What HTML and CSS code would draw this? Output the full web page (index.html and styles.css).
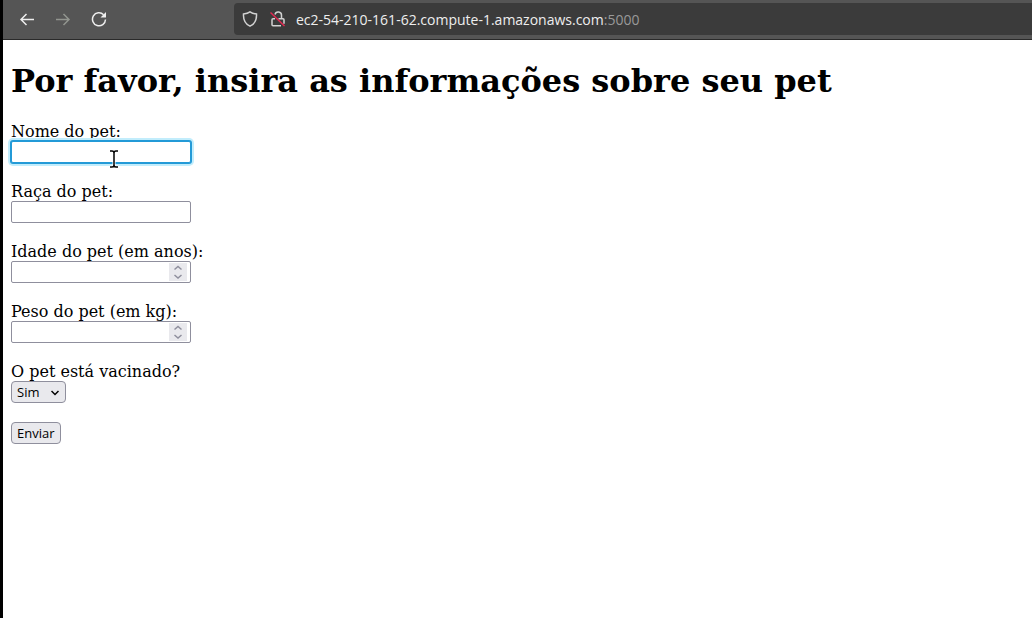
FILE: index.html
```html
<!DOCTYPE html>
<html lang="pt-BR">
<head>
<meta charset="utf-8">
<title>Informações do pet</title>
<link rel="stylesheet" href="styles.css">
</head>
<body>
<div class="window">
  <header class="toolbar">
    <nav class="nav">
      <button class="nav-button" type="button" aria-label="Voltar">
        <svg width="16" height="16" viewBox="0 0 16 16"><path d="M15 8.500H2M7.500 3L2 8.500 7.500 14"/></svg>
      </button>
      <button class="nav-button nav-button-off" type="button" aria-label="Avançar" disabled>
        <svg width="16" height="16" viewBox="0 0 16 16"><path d="M1 8.500h13M8.500 3L14 8.500 8.500 14"/></svg>
      </button>
      <button class="nav-button" type="button" aria-label="Recarregar">
        <svg width="16" height="16" viewBox="0 0 16 16"><path d="M12.600 3.700A6.500 6.500 0 1 0 14.500 8.500"/><path class="solid" d="M15 1v5.500H9.500z"/></svg>
      </button>
    </nav>
    <div class="address">
      <svg class="address-icon" width="16" height="16" viewBox="0 0 16 16"><path d="M8 .8C6 2.200 3.800 2.700 1.500 3c-.3 5 1 9.500 6.500 12.200C13.500 12.500 14.800 8 14.500 3 12.200 2.700 10 2.200 8 .8z"/></svg>
      <svg class="address-icon" width="16" height="16" viewBox="0 0 16 16"><path d="M5 3.500a3.300 3.300 0 0 1 6.500 1V8M8.500 7.700H13q1 0 1 1v4M11 14.800H3q-1 0-1-1v-5q0-1 1-1h2"/><path class="slash" d="M.5 1.500l14 13.500"/></svg>
      <div class="url">ec2-54-210-161-62.compute-1.amazonaws.com<span class="port">:5000</span></div>
    </div>
  </header>
  <main class="page">
    <h1 class="title">Por favor, insira as informações sobre seu pet</h1>
    <form class="form">
      <div class="field">
        <label class="label" for="nome">Nome do pet:</label>
        <div class="control">
          <input class="box box-focused" id="nome" name="nome" type="text">
          <svg class="pointer" width="10" height="20" viewBox="0 0 10 20"><path class="halo" d="M1 2h2q2 0 2 2 0-2 2-2h2M5 4v12M1 18h2q2 0 2-2 0 2 2 2h2"/><path d="M1 2h2q2 0 2 2 0-2 2-2h2M5 4v12M1 18h2q2 0 2-2 0 2 2 2h2"/></svg>
        </div>
      </div>
      <div class="field">
        <label class="label" for="raca">Raça do pet:</label>
        <input class="box" id="raca" name="raca" type="text">
      </div>
      <div class="field">
        <label class="label" for="idade">Idade do pet (em anos):</label>
        <div class="control">
          <input class="box" id="idade" name="idade" type="number">
          <svg class="spinner" width="18" height="18" viewBox="0 0 18 18"><path d="M5.500 6.500L9 3.500l3.500 3M5.500 12L9 15l3.500-3"/></svg>
        </div>
      </div>
      <div class="field">
        <label class="label" for="peso">Peso do pet (em kg):</label>
        <div class="control">
          <input class="box" id="peso" name="peso" type="number">
          <svg class="spinner" width="18" height="18" viewBox="0 0 18 18"><path d="M5.500 6.500L9 3.500l3.500 3M5.500 12L9 15l3.500-3"/></svg>
        </div>
      </div>
      <div class="field">
        <label class="label" for="vacinado">O pet está vacinado?</label>
        <div class="control">
          <select class="select" id="vacinado" name="vacinado"><option>Sim</option><option>Não</option></select>
          <svg class="chevron" width="8" height="6" viewBox="0 0 8 6"><path d="M.5 1L4 4.500 7.500 1"/></svg>
        </div>
      </div>
      <button class="submit" type="submit">Enviar</button>
    </form>
  </main>
</div>
</body>
</html>
```
FILE: styles.css
```css
* {
  box-sizing: border-box;
}

body {
  margin: 0;
  background: #fff;
  color: #000;
  font-family: "DejaVu Serif", serif;
  font-size: 16px;
}

.window {
  min-height: 100vh;
  border-left: 3px solid #000;
}

.toolbar {
  display: flex;
  align-items: center;
  height: 40px;
  padding-bottom: 1px;
  background: #555;
  border-bottom: 1px solid #2a2a2a;
}

.nav {
  display: flex;
  gap: 4px;
  width: 231px;
  padding-left: 8px;
}

.nav-button {
  display: flex;
  align-items: center;
  justify-content: center;
  width: 32px;
  height: 32px;
  padding: 0;
  border: 0;
  background: none;
  color: #eee;
}

.nav-button-off {
  color: #92958f;
}

svg {
  fill: none;
  stroke: currentColor;
  stroke-width: 1.5;
}

.solid {
  fill: currentColor;
  stroke: none;
}

.address {
  display: flex;
  flex: 1;
  align-items: center;
  gap: 12px;
  height: 32px;
  padding-left: 8px;
  background: #3b3b3b;
  border-radius: 4px 0 0 4px;
  color: #eee;
  font-family: "Open Sans", sans-serif;
  font-size: 14px;
}

.address-icon {
  color: #d2d2d2;
}

.url {
  margin-left: -2px;
}

.slash {
  stroke: #e22850;
}

.port {
  color: #999;
}

.page {
  padding: 22px 8px;
}

.title {
  margin: 0 0 22px;
  font-size: 32px;
  line-height: 38px;
}

.form {
  display: flex;
  flex-direction: column;
  align-items: flex-start;
  gap: 19px;
}

.field {
  display: flex;
  flex-direction: column;
  align-items: flex-start;
}

.label {
  line-height: 19px;
}

.control {
  display: flex;
  position: relative;
}

.box {
  width: 180px;
  height: 22px;
  margin: 0;
  padding: 1px 4px;
  border: 1px solid #8f8f9d;
  border-radius: 2px;
  background: #fff;
  font-family: "Open Sans", sans-serif;
  font-size: 13px;
  appearance: textfield;
}

.box:focus {
  outline: none;
}

.box-focused {
  border-color: #239ad7;
  box-shadow: 0 0 0 1px #239ad7, 0 0 0 3px #c2edfc;
}

.pointer {
  position: absolute;
  top: 8px;
  left: 98px;
  color: #000;
}

.halo {
  stroke: #fff;
  stroke-width: 3;
}

.spinner {
  position: absolute;
  top: 2px;
  right: 4px;
  background: #e9e9ed;
  color: #8f8f9d;
}

.select,
.submit {
  height: 22px;
  margin: 0;
  padding: 0 5px;
  border: 1px solid #8f8f9d;
  border-radius: 4px;
  background: #e9e9ed;
  color: #000;
  font-family: "Open Sans", sans-serif;
  font-size: 13px;
  line-height: 20px;
}

.select {
  width: 55px;
  appearance: none;
}

.submit {
  min-width: 49px;
}

.chevron {
  position: absolute;
  top: 9px;
  right: 7px;
  pointer-events: none;
}
```
